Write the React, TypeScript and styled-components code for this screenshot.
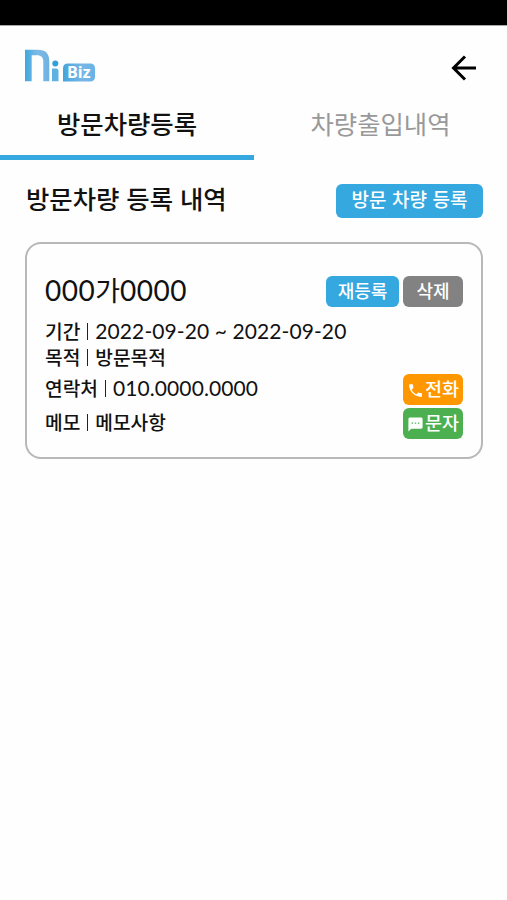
import React from "react";
import styled, { createGlobalStyle } from "styled-components";

const Global = createGlobalStyle`
  *, *::before, *::after { box-sizing: border-box; }
  body { margin: 0; background: #fefefe; color: #111; font-family: "Noto Sans CJK KR", sans-serif; }
  button { font: inherit; border: 0; padding: 0; background: none; color: inherit; }
  h1, h2, p { margin: 0; font-weight: 400; }
`;

const Screen = styled.div`
  width: 507px;
  height: 900px;
  overflow: hidden;
  background: #fefefe;
`;

const StatusBar = styled.div`
  height: 26px;
  background: #000;
  border-bottom: 1px solid #a8a8a8;
`;

const Header = styled.header`
  height: 74px;
  padding: 0 30px 0 24px;
  display: flex;
  justify-content: space-between;
  align-items: flex-start;
`;

const Logo = styled.svg`
  display: block;
  margin-top: 22px;
`;

const BackButton = styled.button`
  margin-top: 29px;
  height: 26px;
`;

const Tabs = styled.nav`
  display: grid;
  grid-template-columns: 254px 253px;
  height: 60px;
`;

const Tab = styled.button<{ $active?: boolean }>`
  height: 60px;
  padding-bottom: 8px;
  line-height: 47px;
  font-size: 25.4px;
  font-weight: ${(p) => (p.$active ? 500 : 400)};
  color: ${(p) => (p.$active ? "#111" : "#999")};
  border-bottom: 5px solid ${(p) => (p.$active ? "#35a8e0" : "transparent")};
`;

const SectionHead = styled.div`
  display: flex;
  justify-content: space-between;
  height: 82px;
  padding: 24px 24px 0 26px;
`;

const SectionTitle = styled.h1`
  && { font-weight: 500; }
  font-size: 25.4px;
  line-height: 28px;
  word-spacing: 1.2px;
`;

const Button = styled.button<{ $color: string; $w: number; $h: number; $size: number }>`
  display: flex;
  align-items: center;
  justify-content: center;
  gap: 1px;
  width: ${(p) => p.$w}px;
  height: ${(p) => p.$h}px;
  padding-bottom: 3px;
  border-radius: 6px;
  background: ${(p) => p.$color};
  color: #fff;
  font-size: ${(p) => p.$size}px;
  font-weight: 500;
  line-height: 1;
  white-space: nowrap;
`;

const WideButton = styled(Button)`
  padding-bottom: 5px;
  word-spacing: 1.2px;
`;

const Card = styled.section`
  width: 458px;
  height: 217px;
  margin-left: 25px;
  padding: 32px 18px 0;
  border: 2px solid #b8b8b8;
  border-radius: 16px;
`;

const CardTop = styled.div`
  display: flex;
  justify-content: space-between;
  height: 42px;
`;

const Plate = styled.h2`
  display: flex;
  font-size: 27px;
  line-height: 28px;
`;

const PlateDigits = styled.span`
  font-family: Lato, sans-serif;
  font-size: 28px;
  letter-spacing: 0.5px;
`;

const ButtonGroup = styled.div`
  display: flex;
  gap: 4px;
`;

const Row = styled.div<{ $h: number }>`
  display: flex;
  justify-content: space-between;
  height: ${(p) => p.$h}px;
`;

const ActionRow = styled(Row)`
  & > button { margin-top: -1px; }
`;

const Line = styled.p`
  && { font-weight: 500; }
  display: flex;
  font-size: 19.2px;
  line-height: 26px;
  white-space: nowrap;
`;

const Divider = styled.span`
  width: 1px;
  height: 17px;
  margin: 5px 7px 0;
  background: #222;
`;

const Digits = styled.span`
  font-family: Lato, sans-serif;
  font-size: 21px;
  font-weight: 400;
  letter-spacing: 0.09px;
`;

const Icon = styled.svg`
  display: block;
  flex: none;
  margin-top: 5px;
`;

const Field = ({ label, children }: { label: string; children: React.ReactNode }) => (
  <Line>
    <span>{label}</span>
    <Divider />
    {children}
  </Line>
);

const App = () => (
  <>
    <Global />
    <Screen>
      <StatusBar />
      <Header>
        <Logo width="73" height="36" viewBox="24 48 73 36" role="img" aria-label="Ni Biz">
          <defs>
            <linearGradient id="mark" x1="25" x2="49" y1="0" y2="0" gradientUnits="userSpaceOnUse">
              <stop offset="0" stopColor="#3ba9df" />
              <stop offset="0.5" stopColor="#80b9e5" />
              <stop offset="1" stopColor="#6db3e2" />
            </linearGradient>
            <linearGradient id="badge" x1="0" x2="1">
              <stop offset="0" stopColor="#45a5dc" />
              <stop offset="0.6" stopColor="#79b6e6" />
              <stop offset="1" stopColor="#68b3e5" />
            </linearGradient>
          </defs>
          <path d="M25 49.700H38C45.500 49.700 49.300 53.500 49.300 61V81.300H43.300V61.500C43.300 57.500 41 55.300 37 55.300H31.700V81.300H25Z" fill="url(#mark)" />
          <circle cx="55.3" cy="63.5" r="3" fill="#319fda" />
          <path d="M52 68.500H56Q58.500 68.500 58.500 71V81.300H52Z" fill="#60b1e3" />
          <path d="M68 63.500H90Q95 63.500 95 68.500V76.500Q95 81.500 90 81.500H63V68.500Q63 63.500 68 63.500Z" fill="url(#badge)" />
          <text x="67" y="78.3" textLength="23.5" lengthAdjust="spacingAndGlyphs" fontFamily="Open Sans, sans-serif" fontWeight="700" fontSize="16.5" fill="#fff">Biz</text>
        </Logo>
        <BackButton aria-label="뒤로">
          <svg width="26" height="26" viewBox="0 0 26 26" fill="none" stroke="#000" strokeWidth="3">
            <path d="M25 13H3M14 1.500L2.500 13L14 24.500" />
          </svg>
        </BackButton>
      </Header>
      <Tabs>
        <Tab $active>방문차량등록</Tab>
        <Tab>차량출입내역</Tab>
      </Tabs>
      <SectionHead>
        <SectionTitle>방문차량 등록 내역</SectionTitle>
        <WideButton $color="#35a8e0" $w={147} $h={34} $size={19}>방문 차량 등록</WideButton>
      </SectionHead>
      <Card>
        <CardTop>
          <Plate>
            <PlateDigits>000</PlateDigits>가<PlateDigits>0000</PlateDigits>
          </Plate>
          <ButtonGroup>
            <Button $color="#35a8e0" $w={73} $h={31} $size={18}>재등록</Button>
            <Button $color="#828282" $w={60} $h={31} $size={18}>삭제</Button>
          </ButtonGroup>
        </CardTop>
        <Row $h={26}>
          <Field label="기간"><Digits>2022-09-20 ~ 2022-09-20</Digits></Field>
        </Row>
        <Row $h={31}>
          <Field label="목적">방문목적</Field>
        </Row>
        <ActionRow $h={34}>
          <Field label="연락처"><Digits>010.0000.0000</Digits></Field>
          <Button $color="#ff9800" $w={60} $h={31} $size={18.5}>
            <Icon width="17" height="17" viewBox="0 0 24 24" fill="#fff">
              <path d="M6.600 10.800c1.400 2.800 3.800 5.100 6.600 6.600l2.200-2.200c.3-.3.7-.4 1-.2 1.100.4 2.300.6 3.600.6.600 0 1 .4 1 1V20c0 .6-.4 1-1 1C10.600 21 3 13.400 3 4c0-.6.4-1 1-1h3.500c.6 0 1 .4 1 1 0 1.300.2 2.500.6 3.600.1.400 0 .7-.2 1z" />
            </Icon>
            전화
          </Button>
        </ActionRow>
        <ActionRow $h={31}>
          <Field label="메모">메모사항</Field>
          <Button $color="#4caf50" $w={60} $h={31} $size={18.5}>
            <Icon width="17" height="17" viewBox="0 0 24 24" fill="#fff">
              <path d="M20 2H4c-1.100 0-2 .9-2 2v18l4-4h14c1.100 0 2-.9 2-2V4c0-1.100-.9-2-2-2zM8.500 11h-2V9h2zm4.500 0h-2V9h2zm4.500 0h-2V9h2z" />
            </Icon>
            문자
          </Button>
        </ActionRow>
      </Card>
    </Screen>
  </>
);

export default App;
